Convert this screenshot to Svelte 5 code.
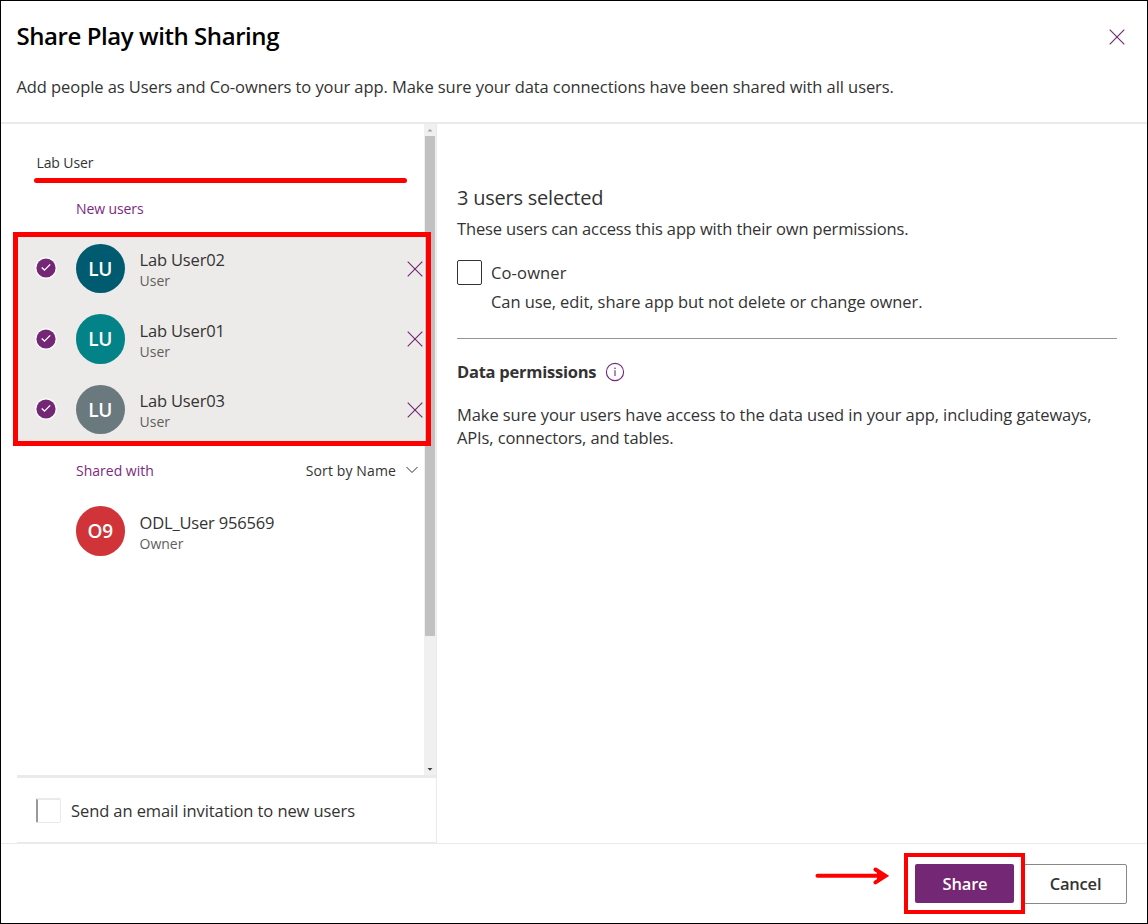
<script>
  const newUsers = [
    { name: 'Lab User02', role: 'User', initials: 'LU', color: '#005b70' },
    { name: 'Lab User01', role: 'User', initials: 'LU', color: '#038387' },
    { name: 'Lab User03', role: 'User', initials: 'LU', color: '#69797e' }
  ];
  const sharedWith = [{ name: 'ODL_User 956569', role: 'Owner', initials: 'O9', color: '#d13438' }];
</script>

{#snippet cross()}
  <svg class="cross" width="16" height="16" viewBox="0 0 16 16"><path d="M0.7 0.7 15.3 15.3M15.3 0.7 0.7 15.3" /></svg>
{/snippet}

{#snippet person(p)}
  <div class="avatar" style:background={p.color}>{p.initials}</div>
  <div class="who">
    <div class="name">{p.name}</div>
    <div class="role">{p.role}</div>
  </div>
{/snippet}

<div class="dialog">
  <header>
    <div class="top">
      <h1>Share Play with Sharing</h1>
      {@render cross()}
    </div>
    <p>Add people as Users and Co-owners to your app. Make sure your data connections have been shared with all users.</p>
  </header>

  <main>
    <section class="left">
      <div class="scroll">
        <div class="people">
          <div class="search">Lab User</div>
          <div class="underline"></div>
          <div class="label new">New users</div>
          <div class="group">
            {#each newUsers as u}
              <div class="row selected">
                <svg class="check" width="22" height="22" viewBox="0 0 22 22">
                  <circle cx="11" cy="11" r="10.8" fill="#fff" />
                  <circle cx="11" cy="11" r="9.6" fill="#742774" />
                  <path d="M6.7 10.5 9.5 13.1 15.2 7.4" fill="none" stroke="#fff" stroke-width="1.3" />
                </svg>
                {@render person(u)}
                {@render cross()}
              </div>
            {/each}
            <div class="highlight"></div>
          </div>
          <div class="label shared">
            <span>Shared with</span>
            <span class="sort">Sort by Name
              <svg width="12" height="8" viewBox="0 0 12 8"><path d="M.5 1 6 6.5 11.5 1" fill="none" stroke="#333" stroke-width="1" /></svg>
            </span>
          </div>
          {#each sharedWith as u}
            <div class="row">{@render person(u)}</div>
          {/each}
        </div>
        <div class="bar">
          <svg width="6" height="3" viewBox="0 0 6 3"><path d="M3 0 5.5 2.5H.5z" fill="#a0a0a0" /></svg>
          <div class="thumb"></div>
          <svg class="down" width="6" height="3" viewBox="0 0 6 3"><path d="M.5 0h5L3 2.8z" fill="#404040" /></svg>
        </div>
      </div>
      <div class="invite">
        <span class="box faint"></span>
        <span class="invite-text">Send an email invitation to new users</span>
      </div>
    </section>

    <section class="right">
      <h2>3 users selected</h2>
      <div class="access">These users can access this app with their own permissions.</div>
      <div class="owner">
        <span class="box"></span>
        <div>
          <div class="co">Co-owner</div>
          <div class="can">Can use, edit, share app but not delete or change owner.</div>
        </div>
      </div>
      <div class="rule"></div>
      <div class="data">
        <h3>Data permissions</h3>
        <svg width="20" height="20" viewBox="0 0 20 20">
          <circle cx="10" cy="10" r="8.6" fill="none" stroke="#742774" stroke-width="1.1" />
          <path d="M10 8.2V14" stroke="#742774" stroke-width="1.1" />
          <circle cx="10" cy="6.3" r=".8" fill="#742774" />
        </svg>
      </div>
      <div class="make"><div>Make sure your users have access to the data used in your app, including gateways,</div><div class="apis">APIs, connectors, and tables.</div></div>
    </section>
  </main>

  <footer>
    <svg class="arrow" width="74" height="20" viewBox="0 0 74 20">
      <path d="M2.5 9.8H66" stroke="#f00" stroke-width="4" stroke-linecap="round" />
      <path d="M60.5 3.5 70.5 9.8 60.5 16.4" fill="none" stroke="#f00" stroke-width="4" stroke-linecap="round" stroke-linejoin="miter" />
      <path d="M62 5 70 9.8 62 15z" fill="#f00" />
    </svg>
    <div class="callout"><button class="primary">Share</button></div>
    <button class="cancel">Cancel</button>
  </footer>
</div>

<style>
  :global(body) { background: #fff; }
  .dialog, .dialog * { box-sizing: border-box; }
  .dialog {
    width: 1148px; height: 924px; border: 1px solid #000; background: #fff;
    display: flex; flex-direction: column; overflow: hidden;
    font: 16.5px/23px "Open Sans", "Noto Sans", sans-serif; color: #333; white-space: nowrap;
  }
  h1, h2, h3, p { margin: 0; }
  svg { display: block; flex: none; }
  .cross path { fill: none; stroke: #742774; stroke-width: 1.15; }

  header { height: 123px; flex: none; border-bottom: 2px solid #eaeaea; padding: 19px 22px 0 15.5px; }
  .top { display: flex; justify-content: space-between; height: 33px; align-items: center; }
  h1 { font-size: 24px; font-weight: 600; line-height: 33px; letter-spacing: -.43px; color: #000; padding-bottom: 2px; }
  header p { margin-top: 22px; letter-spacing: -.077px; }

  main { display: flex; height: 719px; flex: none; }
  .left { width: 435.5px; flex: none; border-right: 1.5px solid #eaeaea; display: flex; flex-direction: column; }
  .scroll { height: 651px; flex: none; display: flex; }
  .people { width: 423px; }
  .search { margin: 28.5px 0 0 35.5px; font-size: 14px; line-height: 20px; letter-spacing: -.12px; }
  .underline { margin: 5.5px 0 0 33px; width: 372.5px; height: 5px; border-radius: 3px; background: #f00; }
  .label { padding-left: 75px; font-size: 14px; color: #7b2a80; }
  .new { height: 50.3px; line-height: 51.5px; letter-spacing: -.1px; }
  .group { position: relative; }
  .highlight { position: absolute; left: 12px; top: -1.3px; width: 418px; height: 214px; border: 5px solid #f00; z-index: 1; }
  .row { height: 70.5px; margin-left: 16px; padding: 0 2px 0 58.5px; display: flex; align-items: center; }
  .selected { background: #edebe9; padding: 0 1.5px 0 18px; }
  .selected .cross { margin-left: auto; }
  .check { margin: -1px 18.5px 0 0; }
  .avatar {
    width: 49.5px; height: 49.5px; flex: none; border-radius: 50%; color: #fff; padding-top: 1px;
    display: flex; align-items: center; justify-content: center; font-size: 19px; font-weight: 600; letter-spacing: -.2px;
  }
  .who { margin-left: 14.5px; padding-top: 3px; }
  .name { line-height: 22px; letter-spacing: -.17px; }
  .role { font-size: 14px; line-height: 20px; color: #605e5c; }
  .shared { height: 51px; line-height: 51px; display: flex; justify-content: space-between; padding-right: 6px; }
  .sort { display: flex; align-items: center; gap: 10px; color: #333; letter-spacing: .12px; }

  .bar { width: 11.5px; background: #f0f0f0; display: flex; flex-direction: column; align-items: center; padding-top: 5px; }
  .thumb { width: 10px; height: 500.5px; margin-top: 3.5px; background: #c1c1c1; }
  .down { margin-top: auto; margin-bottom: 4px; }
  .invite {
    flex: 1; margin-left: 16px; border-top: 3px solid #eaeaea; border-bottom: 1px solid #eaeaea;
    display: flex; align-items: center; padding-left: 19px; gap: 10px;
  }
  .invite-text { letter-spacing: -.09px; }
  .box { width: 25px; height: 25px; flex: none; border: 1px solid #333; border-radius: 2px; }
  .faint { border-color: #eaeaea; border-left: 2px solid #999; border-top-width: 2px; }

  .right { flex: 1; padding: 59px 30.5px 0 20.5px; }
  h2 { font-size: 20px; font-weight: 400; line-height: 30px; letter-spacing: -.22px; }
  .access { margin-top: 4px; letter-spacing: -.15px; }
  .owner { display: flex; gap: 9px; margin-top: 20px; }
  .co { margin-top: 1px; letter-spacing: .15px; }
  .can { margin-top: 6px; letter-spacing: -.075px; }
  .rule { height: 1px; background: #959595; margin-top: 24.5px; }
  .data { display: flex; align-items: center; gap: 9px; height: 24px; margin-top: 21px; }
  h3 { font-size: 16.5px; letter-spacing: -.25px; }
  .make { margin-top: 19px; letter-spacing: -.078px; }
  .apis { letter-spacing: -.12px; }

  footer { flex: 1; border-top: 1px solid #eaeaea; display: flex; align-items: flex-start; justify-content: flex-end; padding: 9px 20px 0 0; }
  .arrow { margin: 13px 15px 0 0; }
  .callout { width: 121px; height: 61px; border: 4px solid #f00; padding: 7px; z-index: 1; flex: none; }
  button { font: 600 16.5px/23px "Open Sans", "Noto Sans", sans-serif; margin: 0; padding: 0; border-radius: 2px; letter-spacing: -.2px; }
  .primary { display: block; width: 99px; height: 39px; border: 0; background: #742774; color: #fff; padding-left: 1px; }
  .cancel { width: 104px; height: 40px; margin: 11px 0 0 -2px; border: 1px solid #8a8886; background: #fff; color: #333; padding: 0 0 2px 1px; }
</style>
